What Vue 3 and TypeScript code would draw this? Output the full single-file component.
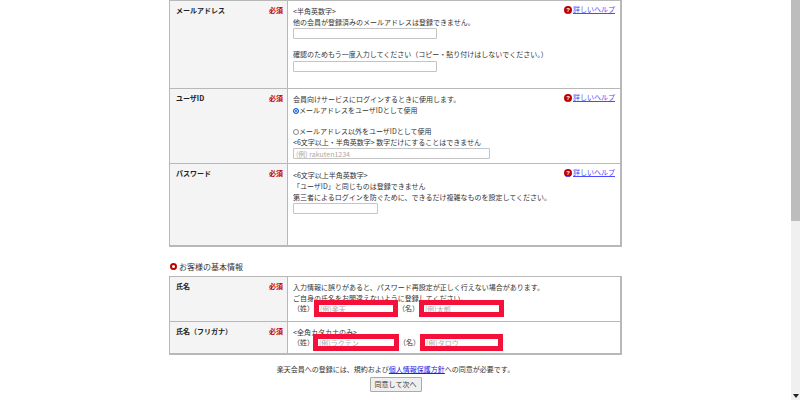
<script setup lang="ts">
const help = '詳しいヘルプ'
</script>

<template>
  <div class="screen">
    <main class="page">
      <section class="table first">
        <div class="row r1">
          <div class="head"><b>メールアドレス</b><em>必須</em></div>
          <div class="body">
            <a class="help" href="#"><i>?</i><span>{{ help }}</span></a>
            <p>&lt;半角英数字&gt;</p>
            <p>他の会員が登録済みのメールアドレスは登録できません。</p>
            <input class="w144 flush" type="text" />
            <p class="gap">確認のためもう一度入力してください（コピー・貼り付けはしないでください。）</p>
            <input class="w144" type="text" />
          </div>
        </div>
        <div class="row r2">
          <div class="head"><b>ユーザID</b><em>必須</em></div>
          <div class="body">
            <a class="help" href="#"><i>?</i><span>{{ help }}</span></a>
            <p>会員向けサービスにログインするときに使用します。</p>
            <label class="radio"><span class="dot on"></span>メールアドレスをユーザIDとして使用</label>
            <label class="radio second"><span class="dot"></span>メールアドレス以外をユーザIDとして使用</label>
            <p>&lt;6文字以上・半角英数字&gt; 数字だけにすることはできません</p>
            <input class="w197 flush" type="text" placeholder="(例) rakuten1234" />
          </div>
        </div>
        <div class="row r3">
          <div class="head"><b>パスワード</b><em>必須</em></div>
          <div class="body lower">
            <a class="help" href="#"><i>?</i><span>{{ help }}</span></a>
            <p>&lt;6文字以上半角英数字&gt;</p>
            <p>「ユーザID」と同じものは登録できません</p>
            <p>第三者によるログインを防ぐために、できるだけ複雑なものを設定してください。</p>
            <input class="w85 flush" type="text" />
          </div>
        </div>
      </section>

      <h2><span class="bullet"></span>お客様の基本情報</h2>

      <section class="table">
        <div class="row r4">
          <div class="head"><b>氏名</b><em>必須</em></div>
          <div class="body">
            <p>入力情報に誤りがあると、パスワード再設定が正しく行えない場合があります。</p>
            <p>ご自身の氏名をお間違えないように登録してください。</p>
            <div class="names n1">
              <span>（姓）</span><input class="mask" type="text" placeholder="(例)楽天" />
              <span class="mei">（名）</span><input class="mask" type="text" placeholder="(例)太郎" />
            </div>
          </div>
        </div>
        <div class="row r5">
          <div class="head"><b>氏名（フリガナ）</b><em>必須</em></div>
          <div class="body">
            <p>&lt;全角カタカナのみ&gt;</p>
            <div class="names n2">
              <span>（姓）</span><input class="mask" type="text" placeholder="(例)ラクテン" />
              <span class="mei">（名）</span><input class="mask" type="text" placeholder="(例)タロウ" />
            </div>
          </div>
        </div>
      </section>

      <p class="agree">楽天会員への登録には、規約および<a href="#">個人情報保護方針</a>への同意が必要です。</p>
      <div class="submit"><button type="button">同意して次へ</button></div>
    </main>

    <aside class="scrollbar">
      <div class="thumb"></div>
      <svg class="arrow" viewBox="0 0 6 4" width="6" height="4"><path d="M0 0H6L3 4Z" /></svg>
    </aside>
  </div>
</template>

<style>
html, body { margin: 0; background: #fff; overflow: hidden; }
</style>

<style scoped>
.screen {
  display: flex;
  width: 800px;
  height: 400px;
  overflow: hidden;
  background: #fff;
  color: #333;
  font: 7px/11px "Noto Sans CJK JP", "Noto Sans", sans-serif;
}
.page {
  width: 453px;
  margin-left: 169px;
  flex: none;
}
.scrollbar {
  margin-left: auto;
  width: 9px;
  height: 400px;
  background: #f0f0f0;
  display: flex;
  flex-direction: column;
  align-items: center;
  justify-content: space-between;
  padding-bottom: 2px;
  box-sizing: border-box;
}
.thumb { width: 100%; height: 221px; background: #bdbdbd; }
.arrow path { fill: #222; }

.table {
  border: 1px solid #b8b8b8;
  border-width: 1px 2px 2px 1px;
  box-sizing: border-box;
}
.row { display: flex; border-bottom: 1px solid #b8b8b8; box-sizing: border-box; }
.row:last-child { border-bottom: 0; }
.r1 { height: 88px; }
.r2 { height: 75px; }
.r3 { height: 81px; }
.r4 { height: 45px; }
.r5 { height: 31px; }

.head {
  width: 118px;
  flex: none;
  display: flex;
  justify-content: space-between;
  align-items: flex-start;
  padding: 4px 4px 0 6px;
  box-sizing: border-box;
  background: #f4f4f4;
  border-right: 1px solid #b8b8b8;
  color: #222;
}
.head b { font-weight: 700; }
.head em { font-style: normal; font-weight: 700; color: #c00000; }

.body {
  position: relative;
  flex: 1;
  padding: 5px 0 0 5px;
  min-width: 0;
}
.body.lower { padding-top: 6px; }
.body p { margin: 0; white-space: nowrap; }
.body .gap { margin-top: 10px; }

.help {
  position: absolute;
  top: 3px;
  right: 5px;
  display: flex;
  align-items: center;
  gap: 1px;
  color: #4a4aff;
}
.help i {
  width: 8px;
  height: 8px;
  border-radius: 50%;
  background: #c00000;
  color: #fff;
  font: 700 6px/8px "Liberation Sans", sans-serif;
  text-align: center;
}

input {
  display: block;
  box-sizing: border-box;
  height: 11px;
  margin: 1px 0 0;
  padding: 0 2px;
  border: 1px solid #c4c4c4;
  border-radius: 1px;
  background: #fff;
  font: 7px/9px "Noto Sans CJK JP", "Liberation Sans", sans-serif;
  color: #333;
}
input::placeholder { color: #aaa; opacity: 1; }
input.flush { margin-top: 0; }
.w144 { width: 144px; }
.w197 { width: 197px; }
.w85 { width: 85px; }

.radio { display: flex; align-items: center; height: 11px; }
.radio.second { margin-top: 10px; }
.dot {
  width: 4px;
  height: 4px;
  margin-right: 0;
  border: 1px solid #888;
  border-radius: 50%;
  background: #fff;
  box-sizing: content-box;
}
.dot.on { background: #0a5fe0; border-color: #0a5fe0; box-shadow: inset 0 0 0 1px #fff; }

h2 {
  display: flex;
  align-items: center;
  height: 11px;
  margin: 14px 0 4px 1px;
  font-size: 8px;
  font-weight: 400;
  color: #333;
}
.bullet {
  width: 3px;
  height: 3px;
  margin-right: 2px;
  border: 2px solid #c00000;
  border-radius: 50%;
  background: #fff;
}

.names { display: flex; align-items: center; }
.names span { white-space: nowrap; }
.mask {
  margin: 0;
  color: #333;
  border: 5px solid #f5103a;
  border-radius: 0;
  height: 17px;
  padding: 0 1px;
  background: #fff;
}
.n1 { margin-top: -4px; }
.n1 .mask { width: 84px; }
.n1 .mask:last-child { width: 85px; }
.n1 .mei { width: 21px; }
.n2 { margin-top: -4px; }
.n2 .mask { width: 86px; margin-left: -1px; }
.n2 .mask:last-child { width: 83px; margin-left: 0; }
.n2 .mei { width: 21px; }
.names span:first-child { width: 21px; }

.agree { margin: 9px 0 0; text-align: center; white-space: nowrap; }
.agree a { color: #2020e0; text-decoration: underline; }
.submit { display: flex; justify-content: center; margin-top: 2px; }
button {
  width: 52px;
  height: 15px;
  padding: 0;
  border: 1px solid #aaa;
  border-radius: 1px;
  background: #efefef;
  color: #333;
  font: 7px/13px "Noto Sans CJK JP", sans-serif;
}
</style>
